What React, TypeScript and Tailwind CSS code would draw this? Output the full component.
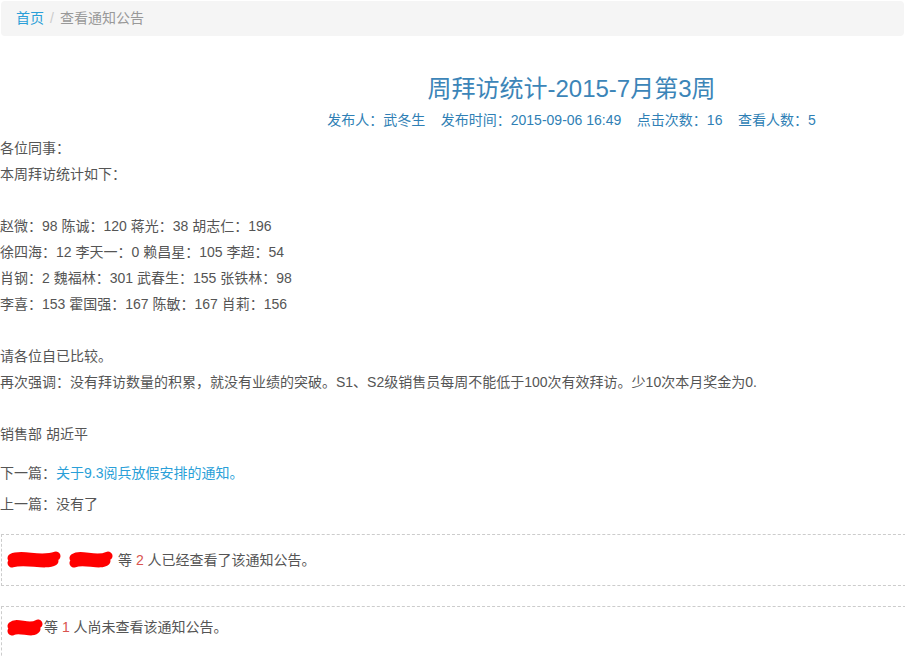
import React from "react";

const font = "font-['Liberation_Sans','Noto_Sans_CJK_SC',sans-serif]";

function Scribble({ w }: { w: number }) {
  return (
    <svg width={w} height="22" viewBox={`0 0 ${w} 22`} className="inline-block align-middle">
      <path
        d={`M6 9 C ${w * 0.3} 4, ${w * 0.6} 13, ${w - 6} 7 M6 14 C ${w * 0.35} 10, ${w * 0.7} 17, ${w - 8} 12`}
        stroke="#ff0000"
        strokeWidth="9"
        strokeLinecap="round"
        fill="none"
      />
    </svg>
  );
}

const stats = [
  "赵微：98 陈诚：120 蒋光：38 胡志仁：196",
  "徐四海：12 李天一：0 赖昌星：105 李超：54",
  "肖钢：2 魏福林：301 武春生：155 张铁林：98",
  "李喜：153 霍国强：167 陈敏：167 肖莉：156",
];

export default function App() {
  return (
    <div className={`${font} w-[905px] h-[657px] overflow-hidden bg-white text-[14px] text-[#555]`}>
      <div className="mx-px mt-px h-[35px] rounded bg-[#f5f5f5] flex items-center px-[15px]">
        <span className="text-[#2a9fd8]">首页</span>
        <span className="px-[6px] text-[#ccc]">/</span>
        <span className="text-[#999]">查看通知公告</span>
      </div>

      <div className="pl-[238px] pt-[38px] text-center">
        <h1 className="text-[24px] leading-[30px] text-[#3c85b8]">周拜访统计-2015-7月第3周</h1>
        <p className="mt-[6px] leading-[20px] text-[#2f7fb5]">
          发布人：武冬生&nbsp;&nbsp;&nbsp;&nbsp;发布时间：2015-09-06 16:49&nbsp;&nbsp;&nbsp;&nbsp;点击次数：16&nbsp;&nbsp;&nbsp;&nbsp;查看人数：5
        </p>
      </div>

      <div className="mt-[5px] leading-[26px]">
        <p>各位同事：</p>
        <p>本周拜访统计如下：</p>
        <p>&nbsp;</p>
        {stats.map((s) => (
          <p key={s}>{s}</p>
        ))}
        <p>&nbsp;</p>
        <p>请各位自已比较。</p>
        <p>再次强调：没有拜访数量的积累，就没有业绩的突破。S1、S2级销售员每周不能低于100次有效拜访。少10次本月奖金为0.</p>
        <p>&nbsp;</p>
        <p>销售部 胡近平</p>
      </div>

      <div className="mt-[13px] leading-[26px]">
        <p>
          下一篇：<span className="text-[#2a9fd8]">关于9.3阅兵放假安排的通知。</span>
        </p>
        <p className="mt-[5px]">上一篇：没有了</p>
      </div>

      <div className="mt-[17px] ml-px w-[920px] h-[52px] border-t border-b border-l border-dashed border-[#ccc] flex items-center pl-[4px]">
        <Scribble w={56} />
        <span className="w-[6px]" />
        <Scribble w={46} />
        <span className="ml-[4px]">
          等 <span className="text-[#d9534f]">2</span> 人已经查看了该通知公告。
        </span>
      </div>

      <div className="mt-[20px] ml-px w-[920px] h-[60px] border-t border-b border-l border-dashed border-[#ccc] flex items-start pt-[10px] pl-[4px]">
        <Scribble w={38} />
        <span>
          等 <span className="text-[#d9534f]">1</span> 人尚未查看该通知公告。
        </span>
      </div>
    </div>
  );
}
